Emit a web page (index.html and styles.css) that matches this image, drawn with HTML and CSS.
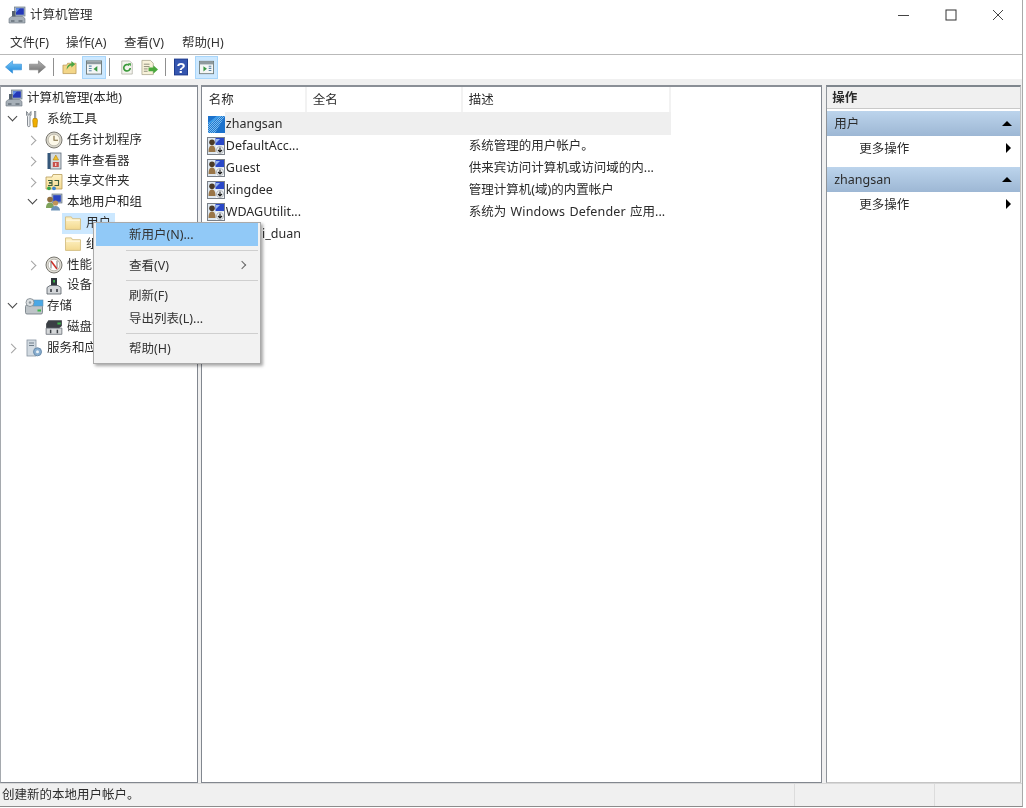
FILE: index.html
```html
<!DOCTYPE html>
<html lang="zh-CN">
<head>
<meta charset="utf-8">
<title>计算机管理</title>
<link rel="stylesheet" href="styles.css">
</head>
<body>
<svg class="defs" width="0" height="0" aria-hidden="true">
  <defs>
    <linearGradient id="gFolder" x1="0" y1="0" x2="0" y2="1"><stop offset="0" stop-color="#fff3c8"/><stop offset="1" stop-color="#f3d98f"/></linearGradient>
    <linearGradient id="gBlue" x1="0" y1="0" x2="0" y2="1"><stop offset="0" stop-color="#7cc8f8"/><stop offset="1" stop-color="#1c86d8"/></linearGradient>
    <linearGradient id="gGray" x1="0" y1="0" x2="0" y2="1"><stop offset="0" stop-color="#b4b4b4"/><stop offset="1" stop-color="#6e6e6e"/></linearGradient>
    <symbol id="i-comp" viewBox="0 0 18 18">
      <rect x="6.500" y="1" width="10.500" height="9" fill="#aab8c4" stroke="#6b7a88" stroke-width=".7"/>
      <rect x="8" y="2.300" width="7.800" height="6.400" fill="#2438b8"/>
      <path d="M8 2.300h4L8 6.500z" fill="#5f8fe8"/>
      <path d="M4 5h3.500v7H4z" fill="#56626e"/>
      <path d="M1 12.500l2.500-2h11l2.500 2v4.500H1z" fill="#a7b0b8" stroke="#6b7580" stroke-width=".6"/>
      <path d="M3 15h3.500M10.500 15h4" stroke="#46505a" stroke-width="1.200"/>
    </symbol>
    <symbol id="i-tools" viewBox="0 0 14 18">
      <path d="M1.500 1.500v3.500l1 1.500v9c0 1.500 2.500 1.500 2.500 0v-9l1-1.500V1.500L4.800 3v2H3V3z" fill="#eceef0" stroke="#6b7278" stroke-width=".8"/>
      <rect x="9.300" y="1.500" width="1.600" height="7" fill="#b0b5ba" stroke="#6b7278" stroke-width=".5"/>
      <path d="M8.300 8.500h3.600l.6 2-.6 6.500H8.300l-.6-6.500z" fill="#f0ae00" stroke="#a87a00" stroke-width=".6"/>
    </symbol>
    <symbol id="i-clock" viewBox="0 0 18 18">
      <circle cx="9" cy="9" r="8" fill="#d9d6cb" stroke="#7c7a72"/>
      <circle cx="9" cy="9" r="5.800" fill="#fcf8e8" stroke="#a9a698" stroke-width=".6"/>
      <path d="M9 4.800V9.300H13" fill="none" stroke="#7c6a40" stroke-width="1.100"/>
    </symbol>
    <symbol id="i-event" viewBox="0 0 16 18">
      <rect x="1.500" y="1" width="3" height="16" fill="#35577a"/>
      <rect x="4.500" y="1" width="10.500" height="16" fill="#d5dce0" stroke="#5c6a78" stroke-width=".8"/>
      <path d="M9.800 3l2.800 5h-5.600z" fill="#f2c02c" stroke="#a07a10" stroke-width=".5"/>
      <rect x="6.800" y="10" width="6" height="5" fill="#c8504a"/>
      <path d="M9.800 11v3" stroke="#fff"/>
    </symbol>
    <symbol id="i-share" viewBox="0 0 18 18">
      <path d="M1 4h6l1-2.500h9V16H1z" fill="url(#gFolder)" stroke="#b79c58" stroke-width=".8"/>
      <path d="M3 7.500h4v2H4.500v.8H7v2.200H3M9.500 7.500h4v5h-4" fill="none" stroke="#3f5f3f" stroke-width="1.100"/>
      <circle cx="4" cy="15.300" r="1.900" fill="#35a545"/><circle cx="9" cy="15.300" r="1.900" fill="#3a84d0"/>
    </symbol>
    <symbol id="i-users" viewBox="0 0 18 18">
      <rect x="7" y="1" width="10" height="9" fill="#a9b6c2" stroke="#6d7a88" stroke-width=".7"/>
      <rect x="8.200" y="2.200" width="7.600" height="6.500" fill="#2a45c0"/>
      <circle cx="5" cy="6.500" r="2.800" fill="#8f6f40"/>
      <path d="M1 15c0-4 1.800-5.500 4-5.500s4 1.500 4 5.500z" fill="#7fa35c"/>
      <circle cx="10.500" cy="10" r="2.600" fill="#c09458"/>
      <path d="M6 17.500c0-3 2-4.500 4.500-4.500s4.500 1.500 4.500 4.500z" fill="#6d93b8"/>
    </symbol>
    <symbol id="i-folder" viewBox="0 0 16 15">
      <path d="M1 13.500V1.800h5.500l1 1.700H15v10z" fill="url(#gFolder)" stroke="#d4bf86" stroke-width=".9"/>
      <path d="M1.500 4.800h13" stroke="#fffbe8"/>
    </symbol>
    <symbol id="i-perf" viewBox="0 0 18 18">
      <circle cx="9" cy="9" r="8" fill="#dedcd4" stroke="#77756e"/>
      <circle cx="9" cy="9" r="5.800" fill="#fff" stroke="#a09c90" stroke-width=".6"/>
      <path d="M6 5l6 8" stroke="#d0302a" stroke-width="1.600"/>
      <path d="M6 5.500v7M12 5v7" stroke="#555" stroke-width=".8"/>
    </symbol>
    <symbol id="i-device" viewBox="0 0 16 18">
      <rect x="5" y="1" width="6" height="7.500" fill="#30363c"/>
      <rect x="7.200" y="3" width="1.800" height="2.500" fill="#3bb54a"/>
      <path d="M4 8.500h8l3 2v6.500H1v-6.500z" fill="#d4d7da" stroke="#555d66" stroke-width=".8"/>
      <path d="M5 12v3M11 12v3" stroke="#30363c" stroke-width="1.500"/>
    </symbol>
    <symbol id="i-storage" viewBox="0 0 20 18">
      <rect x="1.500" y="8" width="17" height="9" rx="1.500" fill="#bec4c8" stroke="#6c767e" stroke-width=".8"/>
      <rect x="9" y="3" width="10" height="6" fill="#4aa8e6" stroke="#6a8ea8" stroke-width=".6"/>
      <circle cx="6" cy="5.500" r="4" fill="#dadee0" stroke="#7b858c" stroke-width=".8"/>
      <circle cx="6" cy="5.500" r="1.300" fill="#8f989e"/>
      <rect x="13.500" y="12.500" width="3.500" height="2" fill="#3bb54a"/>
    </symbol>
    <symbol id="i-disk" viewBox="0 0 16 14">
      <path d="M3 1h12v5L12.500 8H1V4z" fill="#3a3f44"/>
      <path d="M1 8h14v5.500H1z" fill="#d4d7d9" stroke="#666d74" stroke-width=".7"/>
      <rect x="11" y="3" width="3" height="1.800" fill="#3bb54a"/>
      <path d="M5 9.500v3M11 9.500v3" stroke="#3a3f44" stroke-width="1.300"/>
    </symbol>
    <symbol id="i-service" viewBox="0 0 18 18">
      <rect x="2" y="1" width="9" height="16" fill="#d2dae1" stroke="#8793a0" stroke-width=".8"/>
      <path d="M4 4h5M4 6.500h5" stroke="#6f7d89"/>
      <circle cx="12.500" cy="12.800" r="4" fill="#88aed0" stroke="#6a8cac"/>
      <circle cx="12.500" cy="12.800" r="1.500" fill="#eaf1f7"/>
    </symbol>
    <symbol id="i-user" viewBox="0 0 18 18">
      <rect x=".5" y=".5" width="17" height="17" fill="#dfe8f0" stroke="#7a8088"/>
      <rect x="8.500" y="1" width="8.500" height="7" fill="#2a48c8"/>
      <path d="M9 2h4l-4 4z" fill="#9ab8f0"/>
      <circle cx="5" cy="5.200" r="2.800" fill="#4a3a28"/>
      <path d="M1.500 15c0-4.500 1.300-6.500 3.500-6.500s3.500 2 3.500 6.500z" fill="#9a7648"/>
      <path d="M9 9h8v8H9z" fill="#f6f8fa"/>
      <circle cx="13" cy="13" r="3.600" fill="#eef1f3" stroke="#8a9098" stroke-width=".6"/>
      <path d="M13 10.500v4.500M11 13l2 2 2-2" fill="none" stroke="#1b1b1b" stroke-width="1.100"/>
    </symbol>
    <pattern id="pCheck" width="2" height="2" patternUnits="userSpaceOnUse"><rect width="2" height="2" fill="#1f78cf"/><rect width="1" height="1" fill="#7dbcef"/><rect x="1" y="1" width="1" height="1" fill="#7dbcef"/></pattern>
    <symbol id="i-user-new" viewBox="0 0 18 18">
      <rect x="1" y="1" width="17" height="17" fill="#1c72cc"/>
      <path d="M1 18V8l10-7h7L8 18z" fill="url(#pCheck)"/>
      <path d="M10 1h4L4 8H1z" fill="#3f9ce8"/>
    </symbol>
  </defs>
</svg>

<div class="window">
  <header class="titlebar">
    <svg class="title-icon"><use href="#i-comp"/></svg>
    <span class="title-text">计算机管理</span>
    <div class="caption">
      <svg class="cap" viewBox="0 0 12 12"><path d="M0 6.500h11" stroke="#444" stroke-width="1"/></svg>
      <svg class="cap" viewBox="0 0 12 12"><rect x="1" y="1" width="10" height="10" fill="none" stroke="#333" stroke-width="1"/></svg>
      <svg class="cap" viewBox="0 0 12 12"><path d="M1 1l10 10M11 1L1 11" stroke="#444" stroke-width="1"/></svg>
    </div>
  </header>

  <nav class="menubar">
    <span class="menu-item">文件(F)</span>
    <span class="menu-item">操作(A)</span>
    <span class="menu-item">查看(V)</span>
    <span class="menu-item">帮助(H)</span>
  </nav>

  <div class="toolbar">
    <span class="tb tb-arrow"><svg viewBox="0 0 18 14"><path d="M8 .5L.5 7 8 13.500V10h9.500V4H8z" fill="url(#gBlue)" stroke="#2b8ad6" stroke-width=".6"/></svg></span>
    <span class="tb tb-arrow tb-fwd"><svg viewBox="0 0 18 14"><path d="M10 .5L17.500 7 10 13.500V10H.5V4H10z" fill="url(#gGray)" stroke="#777" stroke-width=".6"/></svg></span>
    <span class="tb-sep sep-a"></span>
    <span class="tb tb-up"><svg viewBox="0 0 16 16"><path d="M1 6h4l1-2h9v11H1z" fill="#f3d688" stroke="#b08c44" stroke-width=".7"/><path d="M5 11c0-4 2-6.500 5-6.500V1.500L14 5l-4 3.500V6.500C8 6.500 6.500 8.500 5 11z" fill="#4aa544"/></svg></span>
    <span class="tb tb-active"><svg viewBox="0 0 17 15"><rect x=".5" y=".5" width="16" height="14" fill="#f4f6f6" stroke="#6e7a78"/><rect x="1" y="1" width="15" height="3" fill="#8e9a9e"/><path d="M3 6h3M3 8.500h3M3 11h3" stroke="#5a88a8" stroke-width="1.200"/><path d="M12 6v6L8 9z" fill="#3a9a44"/></svg></span>
    <span class="tb-sep sep-b"></span>
    <span class="tb tb-refresh"><svg viewBox="0 0 16 17"><path d="M2 1h9l3 3v12H2z" fill="#f4f4ee" stroke="#a8a89c" stroke-width=".8"/><path d="M11.700 9a3.700 3.700 0 1 1-1.300-3" fill="none" stroke="#3a9a3a" stroke-width="1.900"/><path d="M9 3.500l3.500.2-.2 3.500z" fill="#3a9a3a"/></svg></span>
    <span class="tb tb-export"><svg viewBox="0 0 18 17"><path d="M1 1h9l3 3v12H1z" fill="#f8f2da" stroke="#a8a48c" stroke-width=".8"/><path d="M3 5h6M3 7.500h6M3 10h4M3 12.500h4" stroke="#8a8a78"/><path d="M8 8.500h5V6l5 4.500-5 4.500v-2.500H8z" fill="#4aa83c"/></svg></span>
    <span class="tb-sep sep-c"></span>
    <span class="tb tb-help"><svg viewBox="0 0 15 18"><rect width="15" height="18" fill="#1f3a8c"/><rect x="1" y="1" width="13" height="16" fill="#3556b0"/></svg><b class="help-q">?</b></span>
    <span class="tb tb-active tb-last"><svg viewBox="0 0 17 15"><rect x=".5" y=".5" width="16" height="14" fill="#f4f6f6" stroke="#6e7a78"/><rect x="1" y="1" width="15" height="3" fill="#8e9a9e"/><path d="M5 6v6l4-3z" fill="#3a9a44"/><path d="M11 6h3M11 8.500h3M11 11h3" stroke="#5a88a8" stroke-width="1.200"/></svg></span>
  </div>

  <main class="panes">
    <section class="pane tree">
      <div class="row lv0"><svg class="ic"><use href="#i-comp"/></svg><span>计算机管理(本地)</span></div>
      <div class="row lv1"><i class="chev open"></i><svg class="ic ic-narrow"><use href="#i-tools"/></svg><span>系统工具</span></div>
      <div class="row lv2"><i class="chev"></i><svg class="ic"><use href="#i-clock"/></svg><span>任务计划程序</span></div>
      <div class="row lv2"><i class="chev"></i><svg class="ic"><use href="#i-event"/></svg><span>事件查看器</span></div>
      <div class="row lv2"><i class="chev"></i><svg class="ic"><use href="#i-share"/></svg><span>共享文件夹</span></div>
      <div class="row lv2"><i class="chev open"></i><svg class="ic"><use href="#i-users"/></svg><span>本地用户和组</span></div>
      <div class="row lv3"><div class="sel"><svg class="ic"><use href="#i-folder"/></svg><span>用户</span></div></div>
      <div class="row lv3"><div class="nosel"><svg class="ic"><use href="#i-folder"/></svg><span>组</span></div></div>
      <div class="row lv2"><i class="chev"></i><svg class="ic"><use href="#i-perf"/></svg><span>性能</span></div>
      <div class="row lv2"><i class="chev none"></i><svg class="ic"><use href="#i-device"/></svg><span>设备管理器</span></div>
      <div class="row lv1"><i class="chev open"></i><svg class="ic ic-wide"><use href="#i-storage"/></svg><span>存储</span></div>
      <div class="row lv2"><i class="chev none"></i><svg class="ic"><use href="#i-disk"/></svg><span>磁盘管理</span></div>
      <div class="row lv1"><i class="chev"></i><svg class="ic"><use href="#i-service"/></svg><span>服务和应用程序</span></div>
    </section>

    <section class="pane list">
      <div class="list-head">
        <span class="col col-name">名称</span>
        <span class="col col-full">全名</span>
        <span class="col col-desc">描述</span>
      </div>
      <div class="list-row current">
        <svg class="ic"><use href="#i-user-new"/></svg><span class="cell-name">zhangsan</span><span class="cell-full"></span><span class="cell-desc"></span>
      </div>
      <div class="list-row">
        <svg class="ic"><use href="#i-user"/></svg><span class="cell-name">DefaultAcc...</span><span class="cell-full"></span><span class="cell-desc">系统管理的用户帐户。</span>
      </div>
      <div class="list-row">
        <svg class="ic"><use href="#i-user"/></svg><span class="cell-name">Guest</span><span class="cell-full"></span><span class="cell-desc">供来宾访问计算机或访问域的内...</span>
      </div>
      <div class="list-row">
        <svg class="ic"><use href="#i-user"/></svg><span class="cell-name">kingdee</span><span class="cell-full"></span><span class="cell-desc">管理计算机(域)的内置帐户</span>
      </div>
      <div class="list-row">
        <svg class="ic"><use href="#i-user"/></svg><span class="cell-name">WDAGUtilit...</span><span class="cell-full"></span><span class="cell-desc wide">系统为 <span class="en">Windows Defender</span> 应用...</span>
      </div>
      <div class="list-row">
        <svg class="ic"><use href="#i-user"/></svg><span class="cell-name">kehuai_duan</span><span class="cell-full"></span><span class="cell-desc"></span>
      </div>
    </section>

    <aside class="pane actions">
      <div class="act-title">操作</div>
      <div class="act-head"><span>用户</span><i class="tri-up"></i></div>
      <div class="act-row"><span>更多操作</span><i class="tri-right"></i></div>
      <div class="act-head"><span>zhangsan</span><i class="tri-up"></i></div>
      <div class="act-row"><span>更多操作</span><i class="tri-right"></i></div>
    </aside>
  </main>

  <footer class="status">
    <span class="st st-main">创建新的本地用户帐户。</span>
    <span class="st st-b"></span>
    <span class="st st-c"></span>
  </footer>
</div>

<div class="ctx">
  <div class="ctx-item hot">新用户(N)...</div>
  <div class="ctx-sep sep-first"></div>
  <div class="ctx-item">查看(V)<i class="ctx-arrow"></i></div>
  <div class="ctx-sep"></div>
  <div class="ctx-item">刷新(F)</div>
  <div class="ctx-item">导出列表(L)...</div>
  <div class="ctx-sep"></div>
  <div class="ctx-item">帮助(H)</div>
</div>
</body>
</html>
```

FILE: styles.css
```css
* { box-sizing: border-box; }
html, body { margin: 0; padding: 0; background: #fff; }
body {
  width: 1026px;
  height: 808px;
  overflow: hidden;
  position: relative;
  font-family: "Noto Sans", "Noto Sans CJK SC", sans-serif;
  font-size: 12.5px;
  color: #2b2b2b;
  line-height: 1;
}
.defs { position: absolute; }
svg { display: block; }

.window {
  width: 1023px;
  height: 807px;
  display: flex;
  flex-direction: column;
  border-right: 1px solid #a9a9a9;
  border-bottom: 1px solid #8c8c8c;
  background: #f0f0f0;
  filter: blur(.35px);
}

.titlebar {
  height: 30px;
  background: #fff;
  display: flex;
  align-items: center;
  padding-left: 8px;
  flex: none;
}
.title-icon { width: 18px; height: 18px; margin-right: 4px; }
.title-text { font-size: 12.5px; color: #333; }
.caption { margin-left: auto; display: flex; align-items: center; padding-right: 18px; gap: 35px; }
.cap { width: 12px; height: 12px; }

.menubar {
  height: 25px;
  background: #fff;
  border-bottom: 1px solid #b9b9b9;
  display: flex;
  align-items: center;
  padding: 3px 0 0 10px;
  flex: none;
}
.menu-item { width: 58px; color: #333; }
.menu-item:first-child { width: 56px; }

.toolbar {
  height: 24px;
  background: #fff;
  display: flex;
  align-items: center;
  padding-left: 5px;
  flex: none;
}
.tb { display: flex; align-items: center; justify-content: center; position: relative; flex: none; }
.tb svg { width: 100%; height: 100%; }
.tb-arrow { width: 17px; height: 14px; }
.tb-fwd { margin-left: 7px; }
.tb-sep { width: 1px; height: 18px; background: #8f8f8f; flex: none; }
.sep-a { margin: 0 8px 0 7px; }
.tb-up { width: 15px; height: 16px; }
.tb-active {
  width: 24px;
  height: 23px;
  margin-left: 5px;
  background: #cce8ff;
  border: 1px solid #a8d6fb;
  padding: 3px;
}
.sep-b { margin: 0 10px 0 3px; }
.tb-refresh { width: 14px; height: 17px; }
.tb-export { width: 17px; height: 17px; margin-left: 7px; }
.sep-c { margin: 0 8px 0 7px; }
.tb-help { width: 14px; height: 18px; }
.help-q { position: absolute; color: #fff; font: bold 15px "Liberation Sans", sans-serif; }
.tb-last { width: 23px; margin-left: 7px; }

.panes {
  flex: 1;
  min-height: 0;
  display: flex;
  padding-top: 6px;
  background: #f0f0f0;
}
.pane { background: #fff; min-height: 0; }

.tree {
  width: 198px;
  border-top: 2px solid #8a8f96;
  border-left: 1px solid #a5a9ae;
  border-right: 1px solid #82878f;
  border-bottom: 1px solid #82878f;
  padding-top: 1px;
}
.row { height: 20.8px; display: flex; align-items: center; white-space: nowrap; }
.ic { width: 18px; height: 18px; flex: none; margin-right: 4px; }
.ic-narrow { width: 14px; margin-right: 8px; }
.ic-wide { width: 20px; margin-left: -1px; margin-right: 3px; }
.lv0 { padding-left: 4px; }
.lv1 { padding-left: 7px; }
.lv2 { padding-left: 27px; }
.lv3 { padding-left: 61px; }
.chev { width: 16px; height: 12px; margin-right: 1px; flex: none; position: relative; }
.chev::before {
  content: "";
  position: absolute;
  left: 0;
  top: 3px;
  width: 6px;
  height: 6px;
  border-right: 1.6px solid #a3a3a3;
  border-top: 1.6px solid #a3a3a3;
  transform: rotate(45deg);
}
.chev.open::before {
  left: 1px;
  top: 0;
  border-color: #444;
  transform: rotate(135deg);
}
.chev.none::before { display: none; }
.sel, .nosel { display: flex; align-items: center; height: 20.8px; padding: 0 8px 0 2px; }
.sel { background: #cce8ff; width: 53px; }
.lv3 .ic { width: 18px; height: 16px; margin-right: 4px; }

.list {
  width: 622px;
  margin-left: 3px;
  border-top: 2px solid #8a8f96;
  border-left: 1px solid #82878f;
  border-right: 1px solid #82878f;
  border-bottom: 1px solid #82878f;
}
.list-head { height: 25px; display: flex; background: #fff; align-items: center; }
.col {
  height: 100%;
  display: flex;
  align-items: center;
  padding-left: 7px;
  border-right: 2px solid #f2f2f2;
  padding-top: 1px;
}
.col-full, .col-desc { padding-left: 6px; }
.col-name { width: 105px; }
.col-full { width: 156px; }
.col-desc { width: 208px; }
.list-row {
  height: 22px;
  width: 469px;
  display: flex;
  align-items: center;
  padding-left: 5px;
  white-space: nowrap;
}
.list-row .ic { margin-right: 1px; width: 18px; height: 18px; }
.cell-name { width: 82px; flex: none; }
.cell-full { width: 161px; flex: none; }
.cell-desc { flex: none; }
.wide { word-spacing: 1px; }
.en { letter-spacing: .15px; }
.current { background: linear-gradient(to right, #fff 23px, #efefef 23px); height: 23px; padding-top: 1px; }

.actions {
  width: 195px;
  margin-left: 4px;
  margin-right: 1px;
  border-top: 2px solid #7f868d;
  border-left: 1px solid #8f949a;
  border-right: 1px solid #c4c4c4;
  border-bottom: 1px solid #c4c4c4;
}
.act-title {
  height: 22px;
  background: #f0f0f0;
  border-bottom: 1px solid #c9c9c9;
  display: flex;
  align-items: center;
  padding: 2px 0 0 5px;
  font-weight: 700;
  margin-bottom: 2px;
}
.act-head {
  height: 25px;
  background: linear-gradient(to bottom, #bcd4ec, #9db7d4);
  display: flex;
  align-items: center;
  justify-content: space-between;
  padding: 2px 8px 0 7px;
}
.act-row {
  height: 31px;
  display: flex;
  align-items: flex-start;
  justify-content: space-between;
  padding: 7px 9px 0 32px;
}
.tri-up { width: 0; height: 0; margin-top: -2px; border-left: 5px solid transparent; border-right: 5px solid transparent; border-bottom: 5px solid #000; }
.tri-right { width: 0; height: 0; border-top: 5px solid transparent; border-bottom: 5px solid transparent; border-left: 5px solid #000; }

.status {
  height: 23px;
  background: #f0f0f0;
  border-top: 1px solid #d8d8d8;
  display: flex;
  align-items: center;
  flex: none;
}
.st { height: 100%; display: flex; align-items: center; }
.st-main { width: 794px; padding: 1px 0 0 2px; }
.st-b { width: 140px; border-left: 1px solid #dcdcdc; }
.st-c { flex: 1; border-left: 1px solid #dcdcdc; }

.ctx {
  position: absolute;
  left: 93px;
  top: 222px;
  width: 168px;
  height: 142px;
  background: #f2f2f2;
  border: 1px solid #aaa;
  box-shadow: 2px 2px 3px rgba(0,0,0,.35);
  padding: 0 2px;
  filter: blur(.35px);
}
.ctx-item { height: 23px; display: flex; align-items: center; padding: 2px 0 0 33px; position: relative; color: #333; }
.hot { background: #91c9f7; }
.ctx-sep { height: 1px; background: #cfcfcf; margin: 3px 0 3px 30px; }
.sep-first { margin-top: 4px; }
.ctx-arrow {
  position: absolute;
  right: 13px;
  top: 8px;
  width: 6px;
  height: 6px;
  border-right: 1.3px solid #666;
  border-top: 1.3px solid #666;
  transform: rotate(45deg);
}
```
